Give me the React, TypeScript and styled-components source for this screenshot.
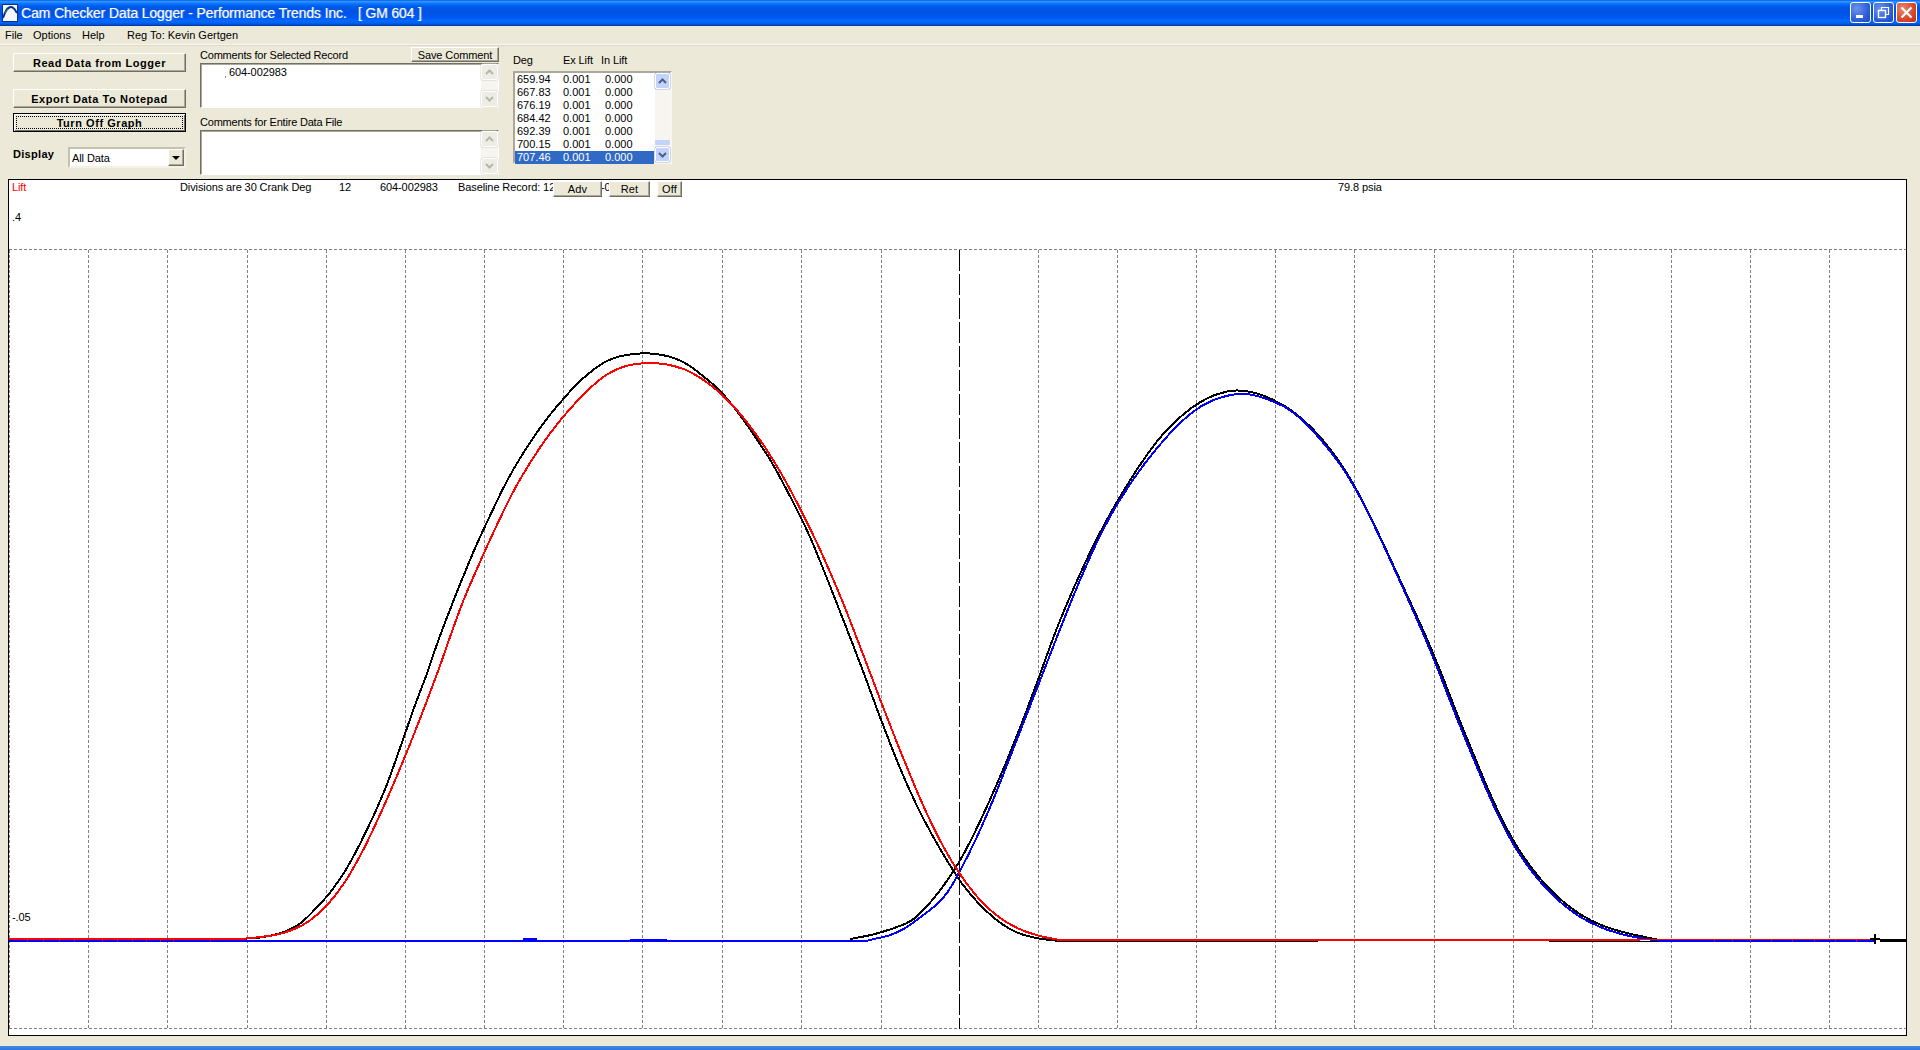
import React from "react";
import styled, { createGlobalStyle, css } from "styled-components";

const GlobalStyle = createGlobalStyle`
  html, body { margin: 0; padding: 0; background: #ece9d8; }
  * { box-sizing: border-box; }
`;

const uiFont = `"Liberation Sans", Arial, sans-serif`;

type Pt = [number, number];

const blackExhaust: Pt[] = [
  [240,939],[263,938],[280,934],[290,929],[300,925],[308,917],[320,903],[327,898],[347,870],[357,850],[375,813],[387,787],[397,755],[405,735],[413,710],[420,690],[427,677],[433,653],[439,639],[448,615],[457,590],[468,567],[473,550],[485,528],[493,508],[505,485],[515,465],[523,455],[535,433],[552,412],[565,397],[577,383],[590,372],[600,365],[607,360],[620,356],[633,353],[658,353],[667,356],[680,360],[690,365],[698,373],[713,383],[722,393],[733,405],[743,420],[755,435],[763,450],[770,458],[783,482],[800,517],[808,530],[820,562],[830,585],[840,612],[851,640],[860,662],[880,718],[900,770],[917,807],[933,838],[953,870],[960,882],[977,903],[997,922],[1010,929],[1023,936],[1040,939],[1060,941],
];
const redExhaust: Pt[] = [
  [240,939],[257,937],[277,936],[293,930],[310,922],[325,909],[348,881],[363,850],[383,810],[407,753],[427,700],[440,667],[449,640],[463,598],[477,570],[495,528],[513,490],[533,457],[550,433],[563,416],[588,389],[600,379],[613,370],[627,365],[640,363],[665,362],[687,369],[700,378],[715,387],[722,396],[737,408],[747,423],[763,443],[780,470],[800,508],[817,542],[843,600],[857,640],[880,698],[903,760],[927,815],[943,848],[960,875],[983,907],[1000,917],[1017,930],[1037,936],[1060,940],
];
const blueIntake: Pt[] = [
  [868,940],[892,936],[903,930],[920,918],[940,902],[945,897],[960,873],[977,837],[993,802],[1010,757],[1027,713],[1045,669],[1063,620],[1083,573],[1100,533],[1120,498],[1143,465],[1170,430],[1197,408],[1207,402],[1232,393],[1243,394],[1257,394],[1275,403],[1287,407],[1300,417],[1320,438],[1333,455],[1347,473],[1359,495],[1380,535],[1403,590],[1427,640],[1440,675],[1453,710],[1473,757],[1487,792],[1503,827],[1520,857],[1540,883],[1560,903],[1580,918],[1600,928],[1623,935],[1643,939],[1663,941],
];
const blackIntake: Pt[] = [
  [850,939],[870,936],[897,928],[907,922],[912,922],[927,907],[943,887],[960,863],[980,823],[1000,777],[1020,730],[1042,669],[1053,637],[1068,600],[1082,570],[1100,530],[1117,502],[1143,458],[1165,430],[1182,415],[1200,401],[1217,393],[1237,389],[1253,391],[1275,400],[1293,410],[1313,428],[1330,448],[1347,472],[1359,494],[1380,534],[1403,589],[1428,638],[1441,673],[1454,707],[1474,755],[1488,790],[1504,825],[1521,855],[1541,881],[1561,901],[1581,916],[1601,926],[1624,933],[1650,938],[1665,941],
];

const gridX = [88,167,247,326,405,484,563,642,722,801,881,1038,1117,1196,1275,1354,1434,1513,1592,1671,1750,1829];
const redTicks = [27,43,59,74,102,117,132,146,160,173,210,1714,1732,1750,1771,1792,1814,1835,1856];

const relax = (pts: Pt[]): Pt[] =>
  pts.map((p, i) => {
    if (i === 0 || i === pts.length - 1) return p;
    const a = pts[i - 1];
    const b = pts[i + 1];
    return [(a[0] + 2 * p[0] + b[0]) / 4, (a[1] + 2 * p[1] + b[1]) / 4] as Pt;
  });

const smooth = (raw: Pt[]): string => {
  const pts = relax(raw);
  let d = "";
  for (let i = 0; i < pts.length - 1; i++) {
    const p0 = pts[Math.max(i - 1, 0)];
    const p1 = pts[i];
    const p2 = pts[i + 1];
    const p3 = pts[Math.min(i + 2, pts.length - 1)];
    const c1x = p1[0] + (p2[0] - p0[0]) / 6;
    const c1y = p1[1] + (p2[1] - p0[1]) / 6;
    const c2x = p2[0] - (p3[0] - p1[0]) / 6;
    const c2y = p2[1] - (p3[1] - p1[1]) / 6;
    d += ` C${c1x.toFixed(1)} ${c1y.toFixed(1)} ${c2x.toFixed(1)} ${c2y.toFixed(1)} ${p2[0].toFixed(1)} ${p2[1].toFixed(1)}`;
  }
  return d;
};

const Page = styled.div`
  width: 1920px;
  height: 1050px;
  display: flex;
  flex-direction: column;
  overflow: hidden;
  background: #ece9d8;
  font: 11px ${uiFont};
  color: #000;
`;

const TitleBar = styled.div`
  height: 26px;
  flex: none;
  display: flex;
  align-items: center;
  padding: 0 3px 1px 2px;
  background: linear-gradient(#0058ee 0%, #3593ff 5%, #288eff 8%, #127dff 12%, #036ffc 16%, #0262ee 22%, #0057e5 30%, #0054e3 40%, #0055eb 60%, #005bf5 70%, #026afe 80%, #0062ef 88%, #0052d6 94%, #0040ab 97%, #003092 100%);
`;

const TitleText = styled.span`
  margin-left: 3px;
  flex: 1;
  color: #fff;
  font: 14px ${uiFont};
  letter-spacing: -0.14px;
  white-space: pre;
  text-shadow: 1px 0 0 rgba(255, 255, 255, 0.35);
`;

const WinButtons = styled.div`
  display: flex;
  gap: 2px;
`;

const WinButton = styled.div<{ $close?: boolean }>`
  width: 21px;
  height: 21px;
  border: 1px solid #fff;
  border-radius: 3px;
  display: flex;
  align-items: center;
  justify-content: center;
  background: ${(p) =>
    p.$close
      ? "radial-gradient(circle at 30% 30%, #e9886a, #d8472a 60%, #b9301a)"
      : "radial-gradient(circle at 30% 30%, #6c94ec, #2f5fd8 60%, #1e47c4)"};
`;

const MenuBar = styled.div`
  height: 19px;
  flex: none;
  display: flex;
  align-items: center;
  padding-left: 5px;
  border-bottom: 1px solid #f8f6ee;
  box-shadow: 0 1px 0 #dcd9c8;
  white-space: nowrap;
`;

const MenuItem = styled.span<{ $w: number }>`
  width: ${(p) => p.$w}px;
`;

const TopPanel = styled.div`
  height: 134px;
  flex: none;
  display: flex;
  padding-left: 13px;
`;

const LeftColumn = styled.div`
  width: 173px;
  display: flex;
  flex-direction: column;
  padding-top: 8px;
`;

const raised = css`
  background: #ece9d8;
  border: 1px solid;
  border-color: #fff #716f64 #716f64 #fff;
  box-shadow: inset -1px -1px 0 #aca899;
  display: flex;
  align-items: center;
  justify-content: center;
  white-space: nowrap;
`;

const BigButton = styled.div<{ $top: number; $active?: boolean }>`
  ${raised}
  height: 19px;
  margin-top: ${(p) => p.$top}px;
  font: bold 11px ${uiFont};
  letter-spacing: 0.55px;
  ${(p) =>
    p.$active &&
    css`
      border: 1px solid #000;
      box-shadow: inset 1px 1px 0 #fff, inset -1px -1px 0 #716f64;
      position: relative;
      &::after {
        content: "";
        position: absolute;
        inset: 2px;
        border: 1px dotted #000;
      }
    `}
`;

const DisplayRow = styled.div`
  display: flex;
  align-items: center;
  margin-top: 15px;
  height: 21px;
  justify-content: space-between;
`;

const DisplayLabel = styled.span`
  font: bold 11px ${uiFont};
  letter-spacing: 0.3px;
  margin-top: -8px;
`;

const SelectBox = styled.div`
  width: 118px;
  height: 21px;
  background: #fff;
  border: 2px solid #f4f2e8;
  border-top-color: #c4c1b0;
  border-left-color: #c4c1b0;
  display: flex;
  align-items: center;
  justify-content: space-between;
  padding-left: 2px;
  letter-spacing: -0.1px;
`;

const SelectArrow = styled.div`
  ${raised}
  width: 16px;
  height: 17px;
`;

const Triangle = styled.div`
  width: 0;
  height: 0;
  border-left: 4px solid transparent;
  border-right: 4px solid transparent;
  border-top: 4px solid #000;
`;

const CommentColumn = styled.div`
  margin-left: 14px;
  width: 299px;
  display: flex;
  flex-direction: column;
`;

const CommentHead = styled.div<{ $h: number }>`
  height: ${(p) => p.$h}px;
  display: flex;
  align-items: flex-end;
  justify-content: space-between;
  padding-bottom: 1px;
`;

const CommentLabel = styled.span`
  padding-bottom: 1px;
  white-space: nowrap;
  letter-spacing: -0.2px;
`;

const SaveButton = styled.div`
  ${raised}
  width: 88px;
  height: 15px;
  margin-bottom: 0;
  letter-spacing: -0.1px;
`;

const TextBox = styled.div`
  height: 45px;
  background: #fff;
  border: 1px solid;
  border-color: #716f64 #fff #fff #716f64;
  box-shadow: inset 1px 1px 0 #aca899;
  display: flex;
  justify-content: space-between;
`;

const CommentText = styled.div`
  position: relative;
  padding: 2px 0 0 28px;
  letter-spacing: -0.1px;
  &::before {
    content: "";
    position: absolute;
    left: 24px;
    top: 12px;
    width: 1px;
    height: 2px;
    background: #999;
  }
`;

const ScrollBar = styled.div<{ $w: number }>`
  width: ${(p) => p.$w}px;
  flex: none;
  display: flex;
  flex-direction: column;
  justify-content: space-between;
  background: #f6f5ef;
`;

const ScrollBtn = styled.div<{ $h: number; $on?: boolean }>`
  height: ${(p) => p.$h}px;
  display: flex;
  align-items: center;
  justify-content: center;
  border: 1px solid #fff;
  border-radius: 2px;
  background: ${(p) => (p.$on ? "#c3d3fb" : "#eeede5")};
  box-shadow: ${(p) => (p.$on ? "0 0 0 0.5px #9db5ea" : "0 0 0 0.5px #d6d4c6")};
`;

const ListColumn = styled.div`
  margin-left: 14px;
  width: 159px;
  display: flex;
  flex-direction: column;
`;

const ListHead = styled.div`
  height: 26px;
  display: grid;
  grid-template-columns: 50px 38px auto;
  align-items: end;
  padding-bottom: 5px;
  letter-spacing: -0.1px;
`;

const ListBox = styled.div`
  height: 93px;
  background: #fff;
  border: 2px solid;
  border-color: #aca899 #f8f6ee #f8f6ee #aca899;
  display: flex;
  justify-content: space-between;
`;

const Rows = styled.div`
  width: 139px;
  display: flex;
  flex-direction: column;
`;

const Row = styled.div<{ $selected?: boolean }>`
  height: 13px;
  line-height: 13px;
  display: grid;
  grid-template-columns: 46px 42px auto;
  padding-left: 2px;
  background: ${(p) => (p.$selected ? "#316ac5" : "transparent")};
  color: ${(p) => (p.$selected ? "#fff" : "#000")};
`;

const ScrollStack = styled.div`
  display: flex;
  flex-direction: column;
  gap: 2px;
`;

const ScrollThumb = styled.div`
  height: 5px;
  background: #c3d3fb;
  border-radius: 1px;
`;

const Chart = styled.div`
  position: relative;
  flex: none;
  width: 1899px;
  height: 857px;
  margin-left: 8px;
  border: 1px solid #000;
  background: #fff;
`;

const PlotSvg = styled.svg`
  display: block;
  width: 1897px;
  height: 855px;
`;

const PlotLabel = styled.span<{ $left: number; $top: number; $color?: string }>`
  position: absolute;
  left: ${(p) => p.$left}px;
  top: ${(p) => p.$top}px;
  color: ${(p) => p.$color ?? "#000"};
  line-height: 13px;
  white-space: nowrap;
  letter-spacing: -0.1px;
`;

const PlotButton = styled.div<{ $left: number; $w: number }>`
  ${raised}
  position: absolute;
  top: 1px;
  left: ${(p) => p.$left}px;
  width: ${(p) => p.$w}px;
  height: 16px;
  letter-spacing: 0.2px;
`;

const TaskEdge = styled.div`
  height: 4px;
  margin-top: auto;
  flex: none;
  background: linear-gradient(#3f8ae2, #2f76d8);
`;

const Chevron: React.FC<{ up?: boolean; color: string }> = ({ up, color }) => (
  <svg width="9" height="6" viewBox="0 0 9 6">
    <path d={up ? "M1 5 L4.5 1.5 L8 5" : "M1 1 L4.5 4.5 L8 1"} fill="none" stroke={color} strokeWidth="2" />
  </svg>
);

const AppIcon = () => (
  <svg width="16" height="18" viewBox="0 0 16 18">
    <rect x="0" y="0" width="16" height="18" fill="#0b2f8c" />
    <rect x="1" y="1" width="14" height="14" fill="#f4f8ff" />
    <path d="M1 14 C3 8 5 3 9 3 C12 3 13 6 15 9" fill="none" stroke="#0b2f8c" strokeWidth="2" />
    <path d="M3 9 L6 5" stroke="#25a050" strokeWidth="1" />
    <rect x="1" y="15" width="14" height="2" fill="#f4f8ff" />
  </svg>
);

const rows: [string, string, string][] = [
  ["659.94", "0.001", "0.000"],
  ["667.83", "0.001", "0.000"],
  ["676.19", "0.001", "0.000"],
  ["684.42", "0.001", "0.000"],
  ["692.39", "0.001", "0.000"],
  ["700.15", "0.001", "0.000"],
  ["707.46", "0.001", "0.000"],
];

const DisabledScroll = () => (
  <ScrollBar $w={17}>
    <ScrollBtn $h={16}>
      <Chevron up color="#b8b6a8" />
    </ScrollBtn>
    <ScrollBtn $h={16}>
      <Chevron color="#b8b6a8" />
    </ScrollBtn>
  </ScrollBar>
);

export default function App() {
  return (
    <Page>
      <GlobalStyle />
      <TitleBar>
        <AppIcon />
        <TitleText>{"Cam Checker Data Logger - Performance Trends Inc.   [ GM 604 ]"}</TitleText>
        <WinButtons>
          <WinButton>
            <svg width="13" height="13" viewBox="0 0 13 13">
              <rect x="2" y="9" width="7" height="3" fill="#fff" />
            </svg>
          </WinButton>
          <WinButton>
            <svg width="13" height="13" viewBox="0 0 13 13" fill="none" stroke="#fff">
              <rect x="1.5" y="4.5" width="7" height="7" strokeWidth="1.4" />
              <path d="M4.5 4 V1.5 H11.5 V8.5 H9" strokeWidth="1.2" />
            </svg>
          </WinButton>
          <WinButton $close>
            <svg width="13" height="13" viewBox="0 0 13 13">
              <path d="M1.5 1.5 L11.5 11.5 M11.5 1.5 L1.5 11.5" stroke="#fff" strokeWidth="2.2" />
            </svg>
          </WinButton>
        </WinButtons>
      </TitleBar>

      <MenuBar>
        <MenuItem $w={28}>File</MenuItem>
        <MenuItem $w={49}>Options</MenuItem>
        <MenuItem $w={45}>Help</MenuItem>
        <span>Reg To: Kevin Gertgen</span>
      </MenuBar>

      <TopPanel>
        <LeftColumn>
          <BigButton $top={0}>Read Data from Logger</BigButton>
          <BigButton $top={17}>Export Data To Notepad</BigButton>
          <BigButton $top={5} $active>
            Turn Off Graph
          </BigButton>
          <DisplayRow>
            <DisplayLabel>Display</DisplayLabel>
            <SelectBox>
              <span>All Data</span>
              <SelectArrow>
                <Triangle />
              </SelectArrow>
            </SelectBox>
          </DisplayRow>
        </LeftColumn>

        <CommentColumn>
          <CommentHead $h={18}>
            <CommentLabel>Comments for Selected Record</CommentLabel>
            <SaveButton>Save Comment</SaveButton>
          </CommentHead>
          <TextBox>
            <CommentText>604-002983</CommentText>
            <DisabledScroll />
          </TextBox>
          <CommentHead $h={22}>
            <CommentLabel>Comments for Entire Data File</CommentLabel>
          </CommentHead>
          <TextBox>
            <span />
            <DisabledScroll />
          </TextBox>
        </CommentColumn>

        <ListColumn>
          <ListHead>
            <span>Deg</span>
            <span>Ex Lift</span>
            <span>In Lift</span>
          </ListHead>
          <ListBox>
            <Rows>
              {rows.map((r, i) => (
                <Row key={r[0]} $selected={i === rows.length - 1}>
                  <span>{r[0]}</span>
                  <span>{r[1]}</span>
                  <span>{r[2]}</span>
                </Row>
              ))}
            </Rows>
            <ScrollBar $w={15}>
              <ScrollBtn $h={16} $on>
                <Chevron up color="#4d6185" />
              </ScrollBtn>
              <ScrollStack>
                <ScrollThumb />
                <ScrollBtn $h={15} $on>
                  <Chevron color="#4d6185" />
                </ScrollBtn>
              </ScrollStack>
            </ScrollBar>
          </ListBox>
        </ListColumn>
      </TopPanel>

      <Chart>
        <PlotSvg viewBox="9 180 1897 855">
          <g stroke="#808080" strokeWidth="1" strokeDasharray="3 2" shapeRendering="crispEdges">
            <line x1="9" y1="249.5" x2="1906" y2="249.5" />
            <line x1="9" y1="1028.5" x2="1906" y2="1028.5" />
            <line x1="9.5" y1="250" x2="9.5" y2="1028" />
            {gridX.map((x) => (
              <line key={x} x1={x + 0.5} y1="250" x2={x + 0.5} y2="1028" />
            ))}
          </g>
          <line x1="959.5" y1="250" x2="959.5" y2="1029" stroke="#000" strokeWidth="1" strokeDasharray="21 3" shapeRendering="crispEdges" />
          <g fill="none" strokeWidth="2" strokeLinejoin="round" shapeRendering="crispEdges">
            <path d={`M240 939${smooth(blackExhaust)}`} stroke="#000" />
            <path d={`M850 939${smooth(blackIntake)}`} stroke="#000" />
            <path d="M1060 941.5 H1318 M1549 941.5 H1665" stroke="#000" strokeWidth="1.5" />
            <path d={`M9 940.5 H868${smooth(blueIntake)} H1875`} stroke="#0000ff" />
            <path d="M523 939.3 H537 M630 939.6 H667" stroke="#0000ff" />
            <path d={`M9 939.3 H240${smooth(redExhaust)} H1640`} stroke="#ff0000" />
            <path d="M1640 940 L1660 939.6 H1870" stroke="#ff0000" strokeWidth="1" />
          </g>
          <g fill="#ff0000">
            {redTicks.map((x) => (
              <rect key={x} x={x} y="940" width="1" height="1.5" />
            ))}
          </g>
          <g fill="#000" shapeRendering="crispEdges">
            <rect x="1874" y="934" width="2" height="10" />
            <rect x="1870" y="938" width="10" height="2" />
            <rect x="1880" y="939" width="26" height="3" />
          </g>
        </PlotSvg>
        <PlotLabel $left={3} $top={1} $color="#ff0000">Lift</PlotLabel>
        <PlotLabel $left={171} $top={1}>Divisions are 30 Crank Deg</PlotLabel>
        <PlotLabel $left={330} $top={1}>12</PlotLabel>
        <PlotLabel $left={371} $top={1}>604-002983</PlotLabel>
        <PlotLabel $left={449} $top={1}>Baseline Record: 12</PlotLabel>
        <PlotLabel $left={592} $top={1}>-0</PlotLabel>
        <PlotButton $left={544} $w={49}>Adv</PlotButton>
        <PlotButton $left={600} $w={41}>Ret</PlotButton>
        <PlotButton $left={648} $w={25}>Off</PlotButton>
        <PlotLabel $left={1329} $top={1}>79.8 psia</PlotLabel>
        <PlotLabel $left={3} $top={31}>.4</PlotLabel>
        <PlotLabel $left={3} $top={731}>-.05</PlotLabel>
      </Chart>
      <TaskEdge />
    </Page>
  );
}
